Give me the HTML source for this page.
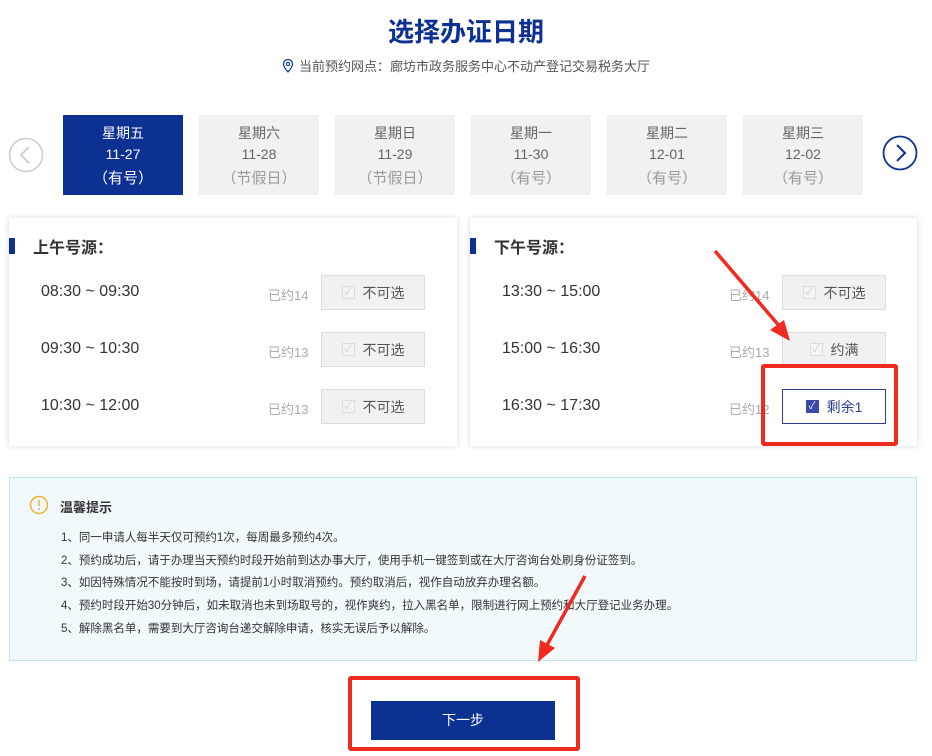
<!DOCTYPE html>
<html><head><meta charset="utf-8"><style>
*{margin:0;padding:0;box-sizing:border-box}
body{width:932px;height:756px;background:#fff;position:relative;overflow:hidden;font-family:"Liberation Sans","Noto Sans CJK SC",sans-serif;color:#333}
.abs{position:absolute}
.title{left:0;width:932px;top:12px;text-align:center;font-size:26px;font-weight:bold;color:#0c3192}
.sub{left:0;width:932px;top:56px;text-align:center;font-size:13px;color:#555}
.tab{top:115px;width:120px;height:80px;background:#f0f1f3;text-align:center;color:#666;font-size:14px;line-height:21px;padding-top:8px}
.tab .s{font-size:15px;margin-top:3px;color:#999}
.tab.on{background:#0c3192;color:#fff}
.tab.on .s{color:#fff}
.panel{top:218px;height:228px;background:#fff;box-shadow:0 0 6px rgba(0,0,0,.15)}
.ph{font-size:16px;font-weight:bold;color:#333}
.bar{width:6px;height:16px;background:#0c3192}
.time{font-size:16px;color:#333;line-height:20px}
.yy{font-size:13px;color:#aaa}
.btn{width:104px;height:35px;background:#f0f1f3;border:1px solid #dcdcdc;font-size:14px;color:#555;display:flex;align-items:center;justify-content:center;gap:8px}
.cb{width:13px;height:13px;border:1px solid #ddd;background:#f4f4f4;font-size:10px;color:#ccc;line-height:11px;text-align:center}
.btn.sel{background:#fff;border:1px solid #2c3e94;color:#2c3e94}
.btn.sel .cb{background:#3a4aa8;border-color:#3a4aa8;color:#fff}
.note{left:9px;top:477px;width:908px;height:184px;background:#f2f9fd;border:1px solid #bfe3f0}
.nl{left:61px;font-size:11.5px;color:#333}
.red{border:4px solid #f12a1f;border-radius:3px}
</style></head><body>
<div class="abs title">选择办证日期</div>
<div class="abs sub"><svg width="12" height="14" viewBox="0 0 12 14" style="vertical-align:-2px;margin-right:5px"><path d="M6 13C6 13 1.5 8 1.5 5a4.5 4.5 0 0 1 9 0C10.5 8 6 13 6 13z" fill="none" stroke="#0c3192" stroke-width="1.2"/><circle cx="6" cy="5" r="1.6" fill="none" stroke="#0c3192" stroke-width="1.1"/></svg>当前预约网点：廊坊市政务服务中心不动产登记交易税务大厅</div>

<svg class="abs" style="left:8px;top:137px" width="36" height="36"><circle cx="18" cy="18" r="16.5" fill="none" stroke="#ccc" stroke-width="1.5"/><path d="M21 10l-8 8 8 8" fill="none" stroke="#ccc" stroke-width="1.8"/></svg>
<svg class="abs" style="left:882px;top:135px" width="36" height="36"><circle cx="18" cy="18" r="16.5" fill="none" stroke="#0c3192" stroke-width="1.8"/><path d="M15 10l8 8-8 8" fill="none" stroke="#0c3192" stroke-width="2"/></svg>

<div class="abs tab on" style="left:63px">星期五<br>11-27<div class="s">（有号）</div></div>
<div class="abs tab" style="left:199px">星期六<br>11-28<div class="s">（节假日）</div></div>
<div class="abs tab" style="left:335px">星期日<br>11-29<div class="s">（节假日）</div></div>
<div class="abs tab" style="left:471px">星期一<br>11-30<div class="s">（有号）</div></div>
<div class="abs tab" style="left:607px">星期二<br>12-01<div class="s">（有号）</div></div>
<div class="abs tab" style="left:743px">星期三<br>12-02<div class="s">（有号）</div></div>

<div class="abs panel" style="left:9px;width:448px"></div>
<div class="abs panel" style="left:470px;width:447px"></div>
<div class="abs bar" style="left:9px;top:238px"></div>
<div class="abs ph" style="left:33px;top:234px">上午号源：</div>
<div class="abs bar" style="left:470px;top:238px"></div>
<div class="abs ph" style="left:494px;top:234px">下午号源：</div>

<div class="abs time" style="left:41px;top:282px">08:30 ~ 09:30</div>
<div class="abs time" style="left:41px;top:339px">09:30 ~ 10:30</div>
<div class="abs time" style="left:41px;top:396px">10:30 ~ 12:00</div>
<div class="abs yy" style="left:268px;top:285px">已约14</div>
<div class="abs yy" style="left:268px;top:342px">已约13</div>
<div class="abs yy" style="left:268px;top:399px">已约13</div>
<div class="abs btn" style="left:321px;top:275px"><span class="cb">✓</span>不可选</div>
<div class="abs btn" style="left:321px;top:332px"><span class="cb">✓</span>不可选</div>
<div class="abs btn" style="left:321px;top:389px"><span class="cb">✓</span>不可选</div>

<div class="abs time" style="left:502px;top:282px">13:30 ~ 15:00</div>
<div class="abs time" style="left:502px;top:339px">15:00 ~ 16:30</div>
<div class="abs time" style="left:502px;top:396px">16:30 ~ 17:30</div>
<div class="abs yy" style="left:729px;top:285px">已约14</div>
<div class="abs yy" style="left:729px;top:342px">已约13</div>
<div class="abs yy" style="left:729px;top:399px">已约12</div>
<div class="abs btn" style="left:782px;top:275px"><span class="cb">✓</span>不可选</div>
<div class="abs btn" style="left:782px;top:332px"><span class="cb">✓</span>约满</div>
<div class="abs btn sel" style="left:782px;top:389px"><span class="cb">✓</span>剩余1</div>
<div class="abs red" style="left:761px;top:364px;width:137px;height:82px"></div>

<div class="abs note"></div>
<svg class="abs" style="left:29px;top:495px" width="20" height="20"><circle cx="10" cy="10" r="8.5" fill="none" stroke="#f0b32e" stroke-width="1.5"/><path d="M10 5v6" stroke="#f0b32e" stroke-width="1.5"/><circle cx="10" cy="14" r="1" fill="#f0b32e"/></svg>
<div class="abs" style="left:60px;top:497px;font-size:13px;font-weight:bold;color:#333">温馨提示</div>
<div class="abs nl" style="left:61px;top:529px">1、同一申请人每半天仅可预约1次，每周最多预约4次。</div>
<div class="abs nl" style="left:61px;top:552px">2、预约成功后，请于办理当天预约时段开始前到达办事大厅，使用手机一键签到或在大厅咨询台处刷身份证签到。</div>
<div class="abs nl" style="left:61px;top:574px">3、如因特殊情况不能按时到场，请提前1小时取消预约。预约取消后，视作自动放弃办理名额。</div>
<div class="abs nl" style="left:61px;top:597px">4、预约时段开始30分钟后，如未取消也未到场取号的，视作爽约，拉入黑名单，限制进行网上预约和大厅登记业务办理。</div>
<div class="abs nl" style="left:61px;top:620px">5、解除黑名单，需要到大厅咨询台递交解除申请，核实无误后予以解除。</div>

<div class="abs" style="left:371px;top:701px;width:184px;height:39px;background:#0c3192;color:#fff;font-size:14px;text-align:center;line-height:39px">下一步</div>
<div class="abs red" style="left:348px;top:676px;width:232px;height:75px"></div>

<svg class="abs" style="left:0;top:0" width="932" height="756">
<path d="M715 251L781 328" stroke="#f12a1f" stroke-width="3.5"/>
<path d="M790 341L770 330L784 320Z" fill="#f12a1f"/>
<path d="M585 576L547 645" stroke="#f12a1f" stroke-width="3.5"/>
<path d="M538 662L540 640L555 648Z" fill="#f12a1f"/>
</svg>
</body></html>
